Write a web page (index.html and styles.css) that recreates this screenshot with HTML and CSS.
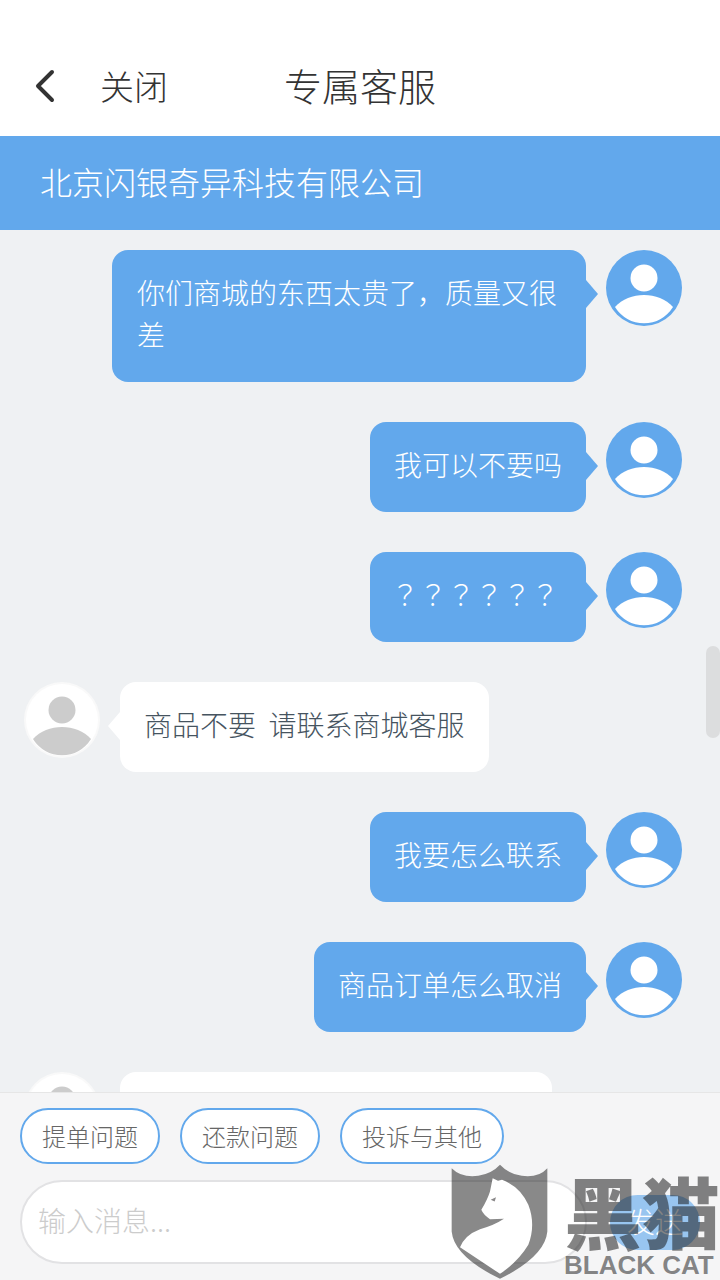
FILE: index.html
```html
<!DOCTYPE html>
<html>
<head>
<meta http-equiv="Content-Type" content="text/html; charset=utf-8"/>
<title>专属客服</title>
<link rel="stylesheet" href="styles.css">
</head>
<body>
<div class="page">
  <div class="header">
    <div class="back">
      <svg class="back-icon" width="20" height="34" viewBox="0 0 20 34"><path d="M17 3 L3 17 L17 31" fill="none" stroke="#333" stroke-width="4" stroke-linecap="round" stroke-linejoin="round"/></svg>
      <span>关闭</span>
    </div>
    <div class="title">专属客服</div>
    <div></div>
  </div>
  <div class="company">北京闪银奇异科技有限公司</div>

  <div class="chat">
    <div class="row me">
      <div class="bubble wide">你们商城的东西太贵了，质量又很差</div>
      <svg class="avatar" viewBox="0 0 76 76"><circle cx="38" cy="38" r="38" fill="#62a8ec"/><circle cx="38" cy="28" r="13.5" fill="#fff"/><path d="M9 57 C16 49 27 45 38 45 C49 45 60 49 67 57 A34 34 0 0 1 9 57 Z" fill="#fff"/></svg>
    </div>
    <div class="row me">
      <div class="bubble">我可以不要吗</div>
      <svg class="avatar" viewBox="0 0 76 76"><circle cx="38" cy="38" r="38" fill="#62a8ec"/><circle cx="38" cy="28" r="13.5" fill="#fff"/><path d="M9 57 C16 49 27 45 38 45 C49 45 60 49 67 57 A34 34 0 0 1 9 57 Z" fill="#fff"/></svg>
    </div>
    <div class="row me">
      <div class="bubble marks">？？？？？？</div>
      <svg class="avatar" viewBox="0 0 76 76"><circle cx="38" cy="38" r="38" fill="#62a8ec"/><circle cx="38" cy="28" r="13.5" fill="#fff"/><path d="M9 57 C16 49 27 45 38 45 C49 45 60 49 67 57 A34 34 0 0 1 9 57 Z" fill="#fff"/></svg>
    </div>
    <div class="row them">
      <svg class="avatar" viewBox="0 0 76 76"><circle cx="38" cy="38" r="38" fill="#f9f9f9"/><circle cx="38" cy="38" r="36" fill="#fff"/><circle cx="38" cy="28" r="13.5" fill="#ccc"/><path d="M9 57 C16 49 27 45 38 45 C49 45 60 49 67 57 A34 34 0 0 1 9 57 Z" fill="#ccc"/></svg>
      <div class="bubble spaced">商品不要&nbsp;&nbsp;请联系商城客服</div>
    </div>
    <div class="row me">
      <div class="bubble">我要怎么联系</div>
      <svg class="avatar" viewBox="0 0 76 76"><circle cx="38" cy="38" r="38" fill="#62a8ec"/><circle cx="38" cy="28" r="13.5" fill="#fff"/><path d="M9 57 C16 49 27 45 38 45 C49 45 60 49 67 57 A34 34 0 0 1 9 57 Z" fill="#fff"/></svg>
    </div>
    <div class="row me">
      <div class="bubble">商品订单怎么取消</div>
      <svg class="avatar" viewBox="0 0 76 76"><circle cx="38" cy="38" r="38" fill="#62a8ec"/><circle cx="38" cy="28" r="13.5" fill="#fff"/><path d="M9 57 C16 49 27 45 38 45 C49 45 60 49 67 57 A34 34 0 0 1 9 57 Z" fill="#fff"/></svg>
    </div>
    <div class="row them">
      <svg class="avatar" viewBox="0 0 76 76"><circle cx="38" cy="38" r="38" fill="#f9f9f9"/><circle cx="38" cy="38" r="36" fill="#fff"/><circle cx="38" cy="28" r="13.5" fill="#ccc"/><path d="M9 57 C16 49 27 45 38 45 C49 45 60 49 67 57 A34 34 0 0 1 9 57 Z" fill="#ccc"/></svg>
      <div class="bubble cut"></div>
    </div>
    <div class="scrollbar"></div>
  </div>

  <div class="footer">
    <div class="chips">
      <div class="chip">提单问题</div>
      <div class="chip">还款问题</div>
      <div class="chip">投诉与其他</div>
    </div>
    <div class="send-row">
      <div class="input">输入消息...</div>
      <div class="send">发送</div>
    </div>
  </div>

  <!-- watermark on top of the footer -->
  <svg class="wm-shield" width="100" height="117" viewBox="60 40 300 350">
    <path d="M65 55 Q95 85 145 78 Q185 72 210 45 Q235 72 275 78 Q325 85 352 55 L352 245 Q345 320 210 387 Q72 320 65 245 Z" fill="#141414" fill-opacity="0.5"/>
    <path d="M188 85 L204 93 L216 90 Q270 110 295 165 Q318 225 295 285 Q265 335 210 372 L90 292 Q105 255 150 238 Q190 228 222 207 L180 208 Q160 195 154 180 Q172 150 180 125 Z" fill="#fff"/>
    <path d="M182 150 L198 142 L194 155 Z" fill="#8a8889"/>
  </svg>
  <div class="wm-text">
    <div class="wm-cn">黑猫</div>
    <div class="wm-en">BLACK CAT</div>
  </div>
</div>
</body>
</html>
```

FILE: styles.css
```css
html, body {
  margin: 0;
  padding: 0;
}

body {
  font-family: "Noto Sans CJK SC", "Noto Sans", sans-serif;
  background-color: #eff1f3;
}

.page {
  position: relative;
  width: 720px;
  height: 1280px;
  overflow: hidden;
  display: flex;
  flex-direction: column;
}

.header {
  height: 102px;
  padding-top: 34px;
  background-color: #fff;
  color: #333;
  display: grid;
  grid-template-columns: 1fr auto 1fr;
  align-items: center;
}

.back {
  display: flex;
  align-items: center;
  gap: 45px;
  padding-left: 35px;
  font-size: 34px;
  font-weight: 300;
}

.back-icon {
  margin-top: 2px;
}

.title {
  margin-bottom: 2px;
  font-size: 38px;
  font-weight: 300;
}

.company {
  height: 94px;
  line-height: 90px;
  padding-left: 40px;
  background-color: #62a8ec;
  color: #fff;
  font-size: 32px;
  font-weight: 300;
}

.chat {
  position: relative;
  flex: 1;
  min-height: 0;
  overflow: hidden;
  padding: 20px 38px 0 24px;
  display: flex;
  flex-direction: column;
  gap: 40px;
}

.row {
  display: flex;
  align-items: flex-start;
  gap: 20px;
  flex-shrink: 0;
}

.me {
  justify-content: flex-end;
}

.avatar {
  width: 76px;
  height: 76px;
  flex-shrink: 0;
}

.bubble {
  position: relative;
  padding: 21px 24px 27px;
  border-radius: 16px;
  font-size: 28px;
  font-weight: 300;
  line-height: 42px;
}

.me .bubble {
  background-color: #62a8ec;
  color: #fff;
}

.them .bubble {
  background-color: #fff;
  color: #46545f;
}

.bubble::after {
  content: "";
  position: absolute;
  top: 30px;
  border-top: 14px solid transparent;
  border-bottom: 14px solid transparent;
}

.me .bubble::after {
  left: 100%;
  border-left: 12px solid #62a8ec;
}

.them .bubble::after {
  right: 100%;
  border-right: 12px solid #fff;
}

.wide {
  width: 424px;
  padding-left: 25px;
  padding-right: 25px;
}

.marks {
  padding-left: 21px;
  padding-right: 27px;
  font-family: "Noto Sans CJK TC", sans-serif;
}

.spaced {
  padding-right: 25px;
}

.cut {
  width: 432px;
  height: 90px;
  padding: 0;
}

.scrollbar {
  position: absolute;
  top: 416px;
  right: 0;
  width: 14px;
  height: 92px;
  border-radius: 7px;
  background-color: #dcddde;
}

.footer {
  height: 188px;
  box-sizing: border-box;
  flex-shrink: 0;
  border-top: 1px solid #e6e6e6;
  background-color: #f5f5f6;
  padding: 15px 20px 0;
}

.chips {
  display: flex;
  gap: 20px;
}

.chip {
  height: 52px;
  line-height: 52px;
  padding: 0 20px;
  border: 2px solid #62a8ec;
  border-radius: 28px;
  background-color: #fff;
  color: #666;
  font-size: 24px;
  font-weight: 300;
}

.send-row {
  display: flex;
  align-items: center;
  margin-top: 16px;
}

.input {
  width: 547px;
  height: 80px;
  line-height: 76px;
  padding-left: 16px;
  border: 2px solid #e2e2e4;
  border-radius: 42px;
  background-color: #fff;
  color: #ccc;
  font-size: 28px;
  font-weight: 300;
}

.send {
  width: 90px;
  height: 55px;
  line-height: 53px;
  margin-left: 23px;
  border-radius: 28px;
  background-color: #98c5f0;
  color: #fff;
  font-size: 28px;
  font-weight: 300;
  text-align: center;
}

.wm-shield {
  position: absolute;
  left: 450px;
  top: 1163px;
}

.wm-text {
  position: absolute;
  left: 564px;
  top: 1168px;
  width: 156px;
  white-space: nowrap;
  color: rgba(20, 20, 20, 0.52);
}

.wm-cn {
  font-size: 78px;
  font-weight: 900;
  line-height: 84px;
}

.wm-en {
  font-family: "Liberation Sans", sans-serif;
  font-size: 26px;
  font-weight: bold;
  line-height: 26px;
}
```
